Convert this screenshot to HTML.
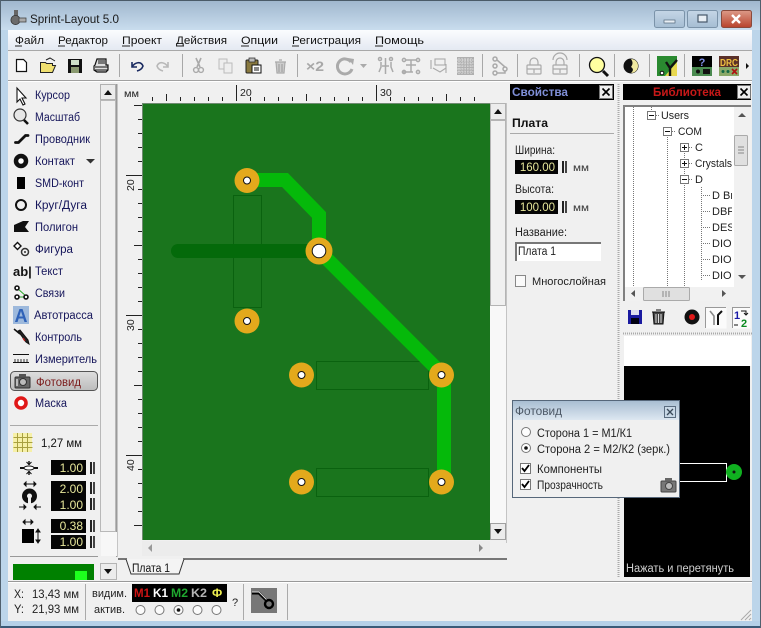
<!DOCTYPE html>
<html><head><meta charset="utf-8"><style>
html,body{margin:0;padding:0;background:#f0f0f0;width:761px;height:628px;overflow:hidden}
svg{display:block;position:absolute;left:0;top:0;filter:blur(.35px)}
text{font-family:"Liberation Sans","DejaVu Sans",sans-serif;font-size:11px}
.n text{fill:#15155a;font-size:11.5px}
.k text{fill:#111;font-size:11px}
.f text{fill:#e6e69a;font-size:12px;text-anchor:end}
.ic{fill:none;stroke:#aaa;stroke-width:1.5}
</style></head><body>
<svg width="761" height="628" viewBox="0 0 761 628" lang="ru">
<defs>
<linearGradient id="tg" x1="0" y1="0" x2="0" y2="1"><stop offset="0" stop-color="#9fb6cd"/><stop offset="1" stop-color="#c9ddee"/></linearGradient>
<linearGradient id="mg" x1="0" y1="0" x2="0" y2="1"><stop offset="0" stop-color="#fbfcfe"/><stop offset="1" stop-color="#e4e9f2"/></linearGradient>
<linearGradient id="bg" x1="0" y1="0" x2="0" y2="1"><stop offset="0" stop-color="#c5d6e6"/><stop offset="1" stop-color="#a5bdd3"/></linearGradient>
<linearGradient id="cg" x1="0" y1="0" x2="0" y2="1"><stop offset="0" stop-color="#dd9a88"/><stop offset="1" stop-color="#b8432c"/></linearGradient>
<linearGradient id="pg" x1="0" y1="0" x2="0" y2="1"><stop offset="0" stop-color="#a9bed2"/><stop offset="1" stop-color="#dde7f1"/></linearGradient>
<linearGradient id="fb" x1="0" y1="0" x2="0" y2="1"><stop offset="0" stop-color="#dedede"/><stop offset="1" stop-color="#bcbcbc"/></linearGradient>
<g id="sp"><rect width="2" height="12" fill="#222"/><rect x="3" width="2" height="12" fill="#444"/></g>
</defs>

<!-- frame -->
<rect width="761" height="628" fill="#bcd5ea"/>
<rect width="761" height="30" fill="url(#tg)"/>
<rect width="761" height="1" fill="#4a5a68"/>
<rect x="8" y="30" width="744" height="591" fill="#f0f0f0"/>
<rect y="621" width="761" height="7" fill="#b5d0e8"/>
<rect y="626" width="761" height="2" fill="#3a5a78"/>
<rect width="1" height="628" fill="#50606e"/>
<rect x="760" width="1" height="628" fill="#50606e"/>

<!-- title -->
<g>
<rect x="14" y="10" width="4" height="8" fill="#666"/>
<circle cx="15.5" cy="20" r="4.6" fill="#6b6b6b" stroke="#333" stroke-width=".8"/>
<rect x="19" y="18" width="7" height="4" fill="#aaa" stroke="#444" stroke-width=".8"/>
<text x="30" y="23" fill="#1a1a1a" textLength="89" lengthAdjust="spacingAndGlyphs" style="font-size:12px">Sprint-Layout 5.0</text>
</g>
<rect x="654.5" y="10.5" width="30" height="17" rx="2" fill="url(#bg)" stroke="#7b93a9"/>
<rect x="664" y="20" width="11" height="3" fill="#e8eef4" stroke="#516579" stroke-width=".7"/>
<rect x="687.5" y="10.5" width="30" height="17" rx="2" fill="url(#bg)" stroke="#7b93a9"/>
<rect x="698" y="15" width="9" height="7" fill="#e8eef4" stroke="#46586a" stroke-width="1.2"/>
<rect x="721.5" y="10.5" width="30" height="17" rx="2" fill="url(#cg)" stroke="#8a4a3c"/>
<path d="M732 15l8 8M740 15l-8 8" stroke="#fff" stroke-width="2.4"/>

<!-- menu -->
<rect x="8" y="30" width="744" height="20" fill="url(#mg)"/>
<g class="k" >
<text x="15" y="44" textLength="29" lengthAdjust="spacingAndGlyphs">Файл</text>
<text x="58" y="44" textLength="50" lengthAdjust="spacingAndGlyphs">Редактор</text>
<text x="122" y="44" textLength="40" lengthAdjust="spacingAndGlyphs">Проект</text>
<text x="176" y="44" textLength="51" lengthAdjust="spacingAndGlyphs">Действия</text>
<text x="241" y="44" textLength="37" lengthAdjust="spacingAndGlyphs">Опции</text>
<text x="292" y="44" textLength="69" lengthAdjust="spacingAndGlyphs">Регистрация</text>
<text x="375" y="44" textLength="49" lengthAdjust="spacingAndGlyphs">Помощь</text>
</g>
<path d="M15 46h7M58 46h7M122 46h8M176 46h8M241 46h8M292 46h7M375 46h8" stroke="#222" stroke-width="1"/>
<rect x="8" y="50" width="744" height="1" fill="#a8a8a8"/>
<rect x="8" y="51" width="744" height="29" fill="#f0f0f0"/>
<rect x="8" y="80" width="744" height="1" fill="#a0a0a0"/>
<rect x="8" y="81" width="744" height="1" fill="#fff"/>

<!-- toolbar separators -->
<path d="M119.5 54v23M182.5 54v23M297.5 54v23M482.5 54v23M517.5 54v23M579.5 54v23M614.5 54v23M649.5 54v23M684.5 54v23" stroke="#a8a8a8"/>

<!-- toolbar icons -->
<path d="M16.5 59.500h7l3 3v9h-10z" fill="#fff" stroke="#111" stroke-width="1.200"/>
<path d="M40.500 72.500v-10h5l1 1h6v2h3l-3 7z" fill="#f0e070" stroke="#222"/><path d="M46 60l4-2 5 3" fill="none" stroke="#222"/>
<rect x="68" y="59" width="14" height="14" fill="#111"/><rect x="71" y="60" width="8" height="5" fill="#cfe0c8"/><rect x="71" y="67" width="8" height="6" fill="#8a9a70"/>
<path d="M95 65l2-6h9v6h2v5l-2 2H97l-3-2v-4z" fill="#ddd" stroke="#111" stroke-width="1.200"/><path d="M95 67h13M95 70h13M98 61h7M98 63h7" stroke="#111"/>
<path d="M132 62v5h5M132 67c3-5 9-6 11-1-1 3-3 4-6 5" fill="none" stroke="#1a2a60" stroke-width="1.600"/>
<path d="M168 62v5h-5M168 67c-3-5-9-6-11-1 1 3 3 4 6 5" fill="none" stroke="#b8b8b8" stroke-width="1.600"/>
<path d="M196 58l4 9M201 58l-4 9" stroke="#aaa" stroke-width="1.600"/><circle cx="196" cy="70" r="2.400" fill="none" stroke="#aaa" stroke-width="1.400"/><circle cx="201" cy="70" r="2.400" fill="none" stroke="#aaa" stroke-width="1.400"/>
<rect x="219" y="59" width="8" height="10" fill="#eee" stroke="#bbb"/><rect x="224" y="63" width="8" height="10" fill="#eee" stroke="#bbb"/>
<rect x="246" y="60" width="12" height="13" rx="1" fill="#8a7a40" stroke="#222"/><rect x="249" y="58" width="6" height="4" fill="#bbb" stroke="#222" stroke-width=".7"/><rect x="252" y="65" width="9" height="8" fill="#fff" stroke="#111"/><path d="M254 68h5M254 70h5" stroke="#111"/>
<path d="M275 62h11M279 60h3M276 62l1 11h7l1-11" fill="#ccc" stroke="#aaa" stroke-width="1.200"/><path d="M279 64v8M282 64v8" stroke="#999"/>
<text x="306" y="71" style="font-size:14px;font-weight:bold;fill:#a8a8a8" textLength="18" lengthAdjust="spacingAndGlyphs">×2</text>
<path d="M351 62a7.500 7.500 0 1 0 1 7" fill="none" stroke="#aaa" stroke-width="3"/><path d="M348 58l6 1-1 6z" fill="#aaa"/>
<path d="M360 64h7l-3.500 4z" fill="#aaa"/>
<g class="ic"><path d="M381 62v5l-2 5M391 62v5l2 5M385.500 58v16M382 66h7"/><circle cx="380" cy="59" r="1.500"/><circle cx="391" cy="59" r="1.500"/></g>
<g class="ic"><path d="M406 60h10M406 65h10M403 72h10M411 60v12"/><circle cx="404" cy="60" r="1.600"/><circle cx="418" cy="60" r="1.600"/><circle cx="404" cy="72" r="1.600"/><circle cx="418" cy="72" r="1.600"/></g>
<g class="ic" style="stroke-width:1.100"><rect x="435" y="59" width="10" height="6"/><path d="M431 60v9M446 64v9M433 68l7 4 6-4"/></g>
<rect x="457" y="57" width="17" height="18" fill="#b0b0b0"/><path d="M459 58v16M462 58v16M465 58v16M468 58v16M471 58v16M457 60h17M457 63h17M457 66h17M457 69h17M457 72h17" stroke="#ddd" stroke-dasharray="1.500 1"/>
<g class="ic"><circle cx="495" cy="59" r="2"/><circle cx="495" cy="66" r="2"/><circle cx="495" cy="73" r="2"/><circle cx="505" cy="69" r="2"/><path d="M497 60l8 7M497 73h8v-2"/></g>
<g class="ic" style="stroke-width:1.200"><path d="M530 65v-3a4 4 0 0 1 8 0v3"/><rect x="527" y="65" width="14" height="9" rx="1"/><path d="M527 69h14M534 69v4"/></g>
<g class="ic" style="stroke-width:1.200"><path d="M556 65v-3a4 4 0 0 1 8 0v3M553 60a7 7 0 0 1 14 0"/><rect x="553" y="65" width="14" height="9" rx="1"/><path d="M553 69h14M560 69v4"/></g>
<circle cx="597" cy="65" r="7.500" fill="#ffffa0" stroke="#111" stroke-width="1.300"/><path d="M603 71l5 5" stroke="#111" stroke-width="3"/>
<circle cx="631" cy="66" r="7.500" fill="#111"/><path d="M631 59a7 7 0 0 1 0 14c2-2 3-4 0-6 2-3 2-5 0-8z" fill="#f0e9a0"/>
<rect x="657" y="56" width="20" height="20" fill="#2a9a3a"/><path d="M657 56h20v6l-14 14h-6z" fill="#2a8a30"/><path d="M665 76l12-14v14z" fill="#e8d850"/><path d="M670 76v-8l7-8M670 68l-4-6" stroke="#111" stroke-width="2.400" fill="none"/><circle cx="662" cy="73" r="1.800" fill="#fff" stroke="#111"/>
<rect x="692" y="56" width="20" height="11" fill="#000"/><text x="702" y="66" style="font-size:11px;font-weight:bold;fill:#8090e8;text-anchor:middle">?</text>
<rect x="692" y="67" width="20" height="9" fill="#4a8a50"/><circle cx="698" cy="71.500" r="2" fill="#111"/><rect x="703" y="69" width="7" height="5" fill="#111"/>
<rect x="719" y="56" width="20" height="11" fill="#5a3028"/><text x="729" y="66" style="font-size:10px;font-weight:bold;fill:#f0c040;text-anchor:middle" textLength="18" lengthAdjust="spacingAndGlyphs">DRC</text>
<rect x="719" y="67" width="20" height="9" fill="#8aa868"/><circle cx="723" cy="71.500" r="1.500" fill="#164"/><circle cx="728" cy="71.500" r="1.500" fill="#164"/><path d="M732 69l5 5M737 69l-5 5" stroke="#b01010" stroke-width="1.600"/>
<path d="M746 63v6l3-3z" fill="#111"/>

<!-- left scrollbar -->
<rect x="100.500" y="84.500" width="15" height="15" fill="#ebebeb" stroke="#b0b0b0"/>
<path d="M104 95h8l-4-5z" fill="#111"/>
<rect x="100.500" y="100.500" width="15" height="431" fill="#f0f0f0" stroke="#b8b8b8"/>
<rect x="116" y="84" width="1.500" height="473" fill="#9a9a9a"/>
<rect x="101" y="532" width="16" height="24" fill="#f7f7f7"/>

<!-- left tools -->
<g class="n">
<text x="35" y="99" textLength="35" lengthAdjust="spacingAndGlyphs">Курсор</text>
<text x="35" y="121" textLength="45" lengthAdjust="spacingAndGlyphs">Масштаб</text>
<text x="35" y="143" textLength="55" lengthAdjust="spacingAndGlyphs">Проводник</text>
<text x="35" y="165" textLength="40" lengthAdjust="spacingAndGlyphs">Контакт</text>
<text x="35" y="187" textLength="49" lengthAdjust="spacingAndGlyphs">SMD-конт</text>
<text x="35" y="209" textLength="52" lengthAdjust="spacingAndGlyphs">Круг/Дуга</text>
<text x="35" y="231" textLength="43" lengthAdjust="spacingAndGlyphs">Полигон</text>
<text x="35" y="253" textLength="38" lengthAdjust="spacingAndGlyphs">Фигура</text>
<text x="35" y="275" textLength="28" lengthAdjust="spacingAndGlyphs">Текст</text>
<text x="35" y="297" textLength="30" lengthAdjust="spacingAndGlyphs">Связи</text>
<text x="34" y="319" textLength="59" lengthAdjust="spacingAndGlyphs">Автотрасса</text>
<text x="35" y="341" textLength="47" lengthAdjust="spacingAndGlyphs">Контроль</text>
<text x="35" y="363" textLength="62" lengthAdjust="spacingAndGlyphs">Измеритель</text>
<text x="35" y="407" textLength="32" lengthAdjust="spacingAndGlyphs">Маска</text>
</g>
<path d="M17 88v14l3-3 3 6 2-1-3-6h4z" fill="#fff" stroke="#111" stroke-width="1.100"/>
<circle cx="20" cy="115" r="6" fill="#e6e6e6" stroke="#333" stroke-width="1.200"/><path d="M24 120l4 4" stroke="#111" stroke-width="2.600"/>
<path d="M15.500 142.500h3l7-7h2.500" fill="none" stroke="#111" stroke-width="2.800" stroke-linecap="round"/>
<circle cx="21" cy="161" r="5" fill="#fff" stroke="#111" stroke-width="4.500"/>
<rect x="17" y="177" width="8" height="12" fill="#000"/>
<circle cx="21" cy="205" r="5" fill="none" stroke="#111" stroke-width="2"/>
<path d="M14 232v-7l9-4h6l-4 6 4 5z" fill="#111"/>
<path d="M14 246l3.500-3.500 3.500 3.500-3.500 3.500z" fill="#fff" stroke="#111" stroke-width="1.400"/><circle cx="25" cy="252" r="3.500" fill="none" stroke="#333" stroke-width="1.500"/><circle cx="25" cy="252" r="1" fill="#333"/>
<text x="13" y="276" style="font-size:13px;font-weight:bold;fill:#111">ab|</text>
<path d="M17 288l10 9H17" fill="none" stroke="#2aa82a"/><circle cx="17" cy="288" r="2" fill="#fff" stroke="#111" stroke-width="1.600"/><circle cx="17" cy="297" r="2" fill="#fff" stroke="#111" stroke-width="1.600"/><circle cx="26" cy="297" r="2" fill="#fff" stroke="#111" stroke-width="1.600"/>
<rect x="13" y="306" width="16" height="18" fill="#9db9dc"/><text x="21" y="322" style="font-size:18px;font-weight:bold;fill:#2f62b8;text-anchor:middle">A</text>
<path d="M14 329l6 5" stroke="#111" stroke-width="1.500"/><path d="M18 331l8 11 3 2-1-4-8-10z" fill="#222" stroke="#111"/><path d="M23 338l2 3" stroke="#b02020" stroke-width="1.500"/>
<path d="M13 362.500h16" stroke="#111"/><path d="M13 354.500h16" stroke="#111"/><path d="M15 362v-3M18 362v-3M21 362v-3M24 362v-3M27 362v-3" stroke="#333"/>
<rect x="10.500" y="371.500" width="87" height="19" rx="4" fill="url(#fb)" stroke="#555"/>
<rect x="15" y="377" width="15" height="11" rx="1" fill="#666" stroke="#333"/><rect x="19" y="374" width="7" height="3" fill="#555"/><circle cx="23" cy="382" r="3.500" fill="#bbb" stroke="#333"/><rect x="16" y="379" width="2" height="7" fill="#bbb"/>
<text x="36" y="386" style="font-size:11.500px;fill:#7a1a1a" textLength="45" lengthAdjust="spacingAndGlyphs">Фотовид</text>
<path d="M86 159h9l-4.500 4.500z" fill="#333"/>
<circle cx="21" cy="403" r="5" fill="#fff" stroke="#e01818" stroke-width="3.600"/>
<rect x="10" y="425" width="88" height="1" fill="#aaa"/>

<!-- grid & fields -->
<rect x="13" y="433" width="19" height="19" fill="#f6f0a8"/>
<path d="M13.500 437.500h19M13.500 442.500h19M13.500 447.500h19M17.500 433v19M22.500 433v19M27.500 433v19" stroke="#a8a040"/>
<text x="41" y="447" style="font-size:11.500px;fill:#111" textLength="41" lengthAdjust="spacingAndGlyphs">1,27 мм</text>
<rect x="51" y="460" width="35" height="15" fill="#050505"/>
<rect x="51" y="481" width="35" height="15" fill="#050505"/>
<rect x="51" y="496" width="35" height="15" fill="#050505"/>
<rect x="51" y="519" width="35" height="14" fill="#050505"/>
<rect x="51" y="535" width="35" height="14" fill="#050505"/>
<g class="f"><text x="83" y="472">1.00</text><text x="83" y="493">2.00</text><text x="83" y="509">1.00</text><text x="83" y="530">0.38</text><text x="83" y="546">1.00</text></g>
<use href="#sp" x="90" y="462"/><use href="#sp" x="90" y="482"/><use href="#sp" x="90" y="498"/><use href="#sp" x="90" y="520"/><use href="#sp" x="90" y="536"/>
<path d="M20 468h18" stroke="#111" stroke-width="2"/><ellipse cx="29" cy="468" rx="5" ry="2" fill="#fff" stroke="#111"/><path d="M29 461v4M29 471v4" stroke="#111" stroke-width="1.400"/><path d="M26.500 462l2.500 2.500 2.500-2.500M26.500 474l2.500-2.500 2.500 2.500" fill="none" stroke="#111"/>
<path d="M24 484h12M24 484l2-2v4zM36 484l-2-2v4z" stroke="#111" fill="#111"/>
<circle cx="29.500" cy="496" r="5" fill="#f0f0f0" stroke="#111" stroke-width="5"/>
<rect x="28" y="496" width="3" height="8" fill="#f0f0f0"/>
<path d="M19 507h7M41 507h-7M26 507l-2-2v4zM34 507l2-2v4z" stroke="#111" fill="#111"/>
<rect x="22" y="529" width="12" height="14" fill="#000"/>
<path d="M23 522h10M23 522l2-2v4zM33 522l-2-2v4zM38 529v14M38 529l-2 3h4zM38 543l-2-3h4z" stroke="#111" fill="#111"/>
<rect x="10" y="556" width="88" height="1" fill="#999"/>
<rect x="13" y="564" width="81" height="16" fill="#008000"/>
<rect x="75" y="571" width="12" height="9" fill="#1dff1d"/>
<rect x="100.500" y="563.500" width="16" height="16" fill="#ececec" stroke="#b4b4b4"/>
<path d="M104 569h8l-4 5z" fill="#111"/>

<!-- ruler -->
<path d="M236.500 85v16M376.500 85v16M166.500 94v7M306.500 94v7M446.500 94v7M152.500 97v4M180.500 97v4M194.500 97v4M208.500 97v4M222.500 97v4M250.500 97v4M264.500 97v4M278.500 97v4M292.500 97v4M320.500 97v4M334.500 97v4M348.500 97v4M362.500 97v4M390.500 97v4M404.500 97v4M418.500 97v4M432.500 97v4M460.500 97v4M474.500 97v4" stroke="#222" stroke-width="1"/>
<path d="M126 175.500h16M126 315.500h16M126 455.500h16M134 105.500h8M134 245.500h8M134 385.500h8M134 525.500h8M138 119.500h4M138 133.500h4M138 147.500h4M138 161.500h4M138 189.500h4M138 203.500h4M138 217.500h4M138 231.500h4M138 259.500h4M138 273.500h4M138 287.500h4M138 301.500h4M138 329.500h4M138 343.500h4M138 357.500h4M138 371.500h4M138 399.500h4M138 413.500h4M138 427.500h4M138 441.500h4M138 469.500h4M138 483.500h4M138 497.500h4M138 511.500h4" stroke="#222"/>
<text x="124" y="97" style="font-size:10px;fill:#222" textLength="15" lengthAdjust="spacingAndGlyphs">мм</text>
<text x="240" y="96" style="font-size:10.500px;fill:#222">20</text>
<text x="380" y="96" style="font-size:10.500px;fill:#222">30</text>
<text transform="translate(134,191) rotate(-90)" style="font-size:10.500px;fill:#222">20</text>
<text transform="translate(134,331) rotate(-90)" style="font-size:10.500px;fill:#222">30</text>
<text transform="translate(134,471) rotate(-90)" style="font-size:10.500px;fill:#222">40</text>

<!-- board -->
<rect x="142" y="103" width="348" height="437" fill="#1a751d"/>
<path d="M142 103.500h348M142.500 103v437" stroke="#6e8a70"/>
<g fill="none" stroke="#0a620f" stroke-width="1"><rect x="233.500" y="195.500" width="28" height="112"/><rect x="316.500" y="361.500" width="112" height="28"/><rect x="316.500" y="468.500" width="112" height="28"/></g>
<path d="M178 251H319" stroke="#046a0a" stroke-width="14" stroke-linecap="round"/>
<path d="M247 180H285L319 215V251L444 376V482" fill="none" stroke="#05b90a" stroke-width="14" stroke-linejoin="miter"/>
<g fill="#e3a91c"><circle cx="247" cy="180.500" r="12.500"/><circle cx="247" cy="321" r="12.500"/><circle cx="301.500" cy="375" r="12.500"/><circle cx="441.500" cy="375" r="12.500"/><circle cx="301.500" cy="482" r="12.500"/><circle cx="441.500" cy="482" r="12.500"/><circle cx="319" cy="251" r="13.500"/></g>
<g fill="#fff" stroke="#111"><circle cx="247" cy="180.500" r="3.500"/><circle cx="247" cy="321" r="3.500"/><circle cx="301.500" cy="375" r="3.500"/><circle cx="441.500" cy="375" r="3.500"/><circle cx="301.500" cy="482" r="3.500"/><circle cx="441.500" cy="482" r="3.500"/><circle cx="319" cy="251" r="6.800"/></g>

<!-- right v scrollbar -->
<rect x="490" y="103" width="16" height="437" fill="#f8f8f8"/>
<rect x="490.500" y="103.500" width="15" height="16" fill="#ececec" stroke="#b4b4b4"/>
<path d="M494 114h8l-4-5z" fill="#111"/>
<rect x="490.500" y="120.500" width="15" height="185" fill="#f0f0f0" stroke="#b4b4b4"/>
<rect x="490.500" y="523.500" width="15" height="16" fill="#ececec" stroke="#a0a0a0"/>
<path d="M494 529h8l-4 5z" fill="#111"/>
<rect x="506" y="103" width="1" height="440" fill="#c4c4c4"/>

<!-- h scrollbar -->
<rect x="142" y="541" width="348" height="15" fill="#ececec"/>
<path d="M152 544v8l-4-4z" fill="#999"/><path d="M479 544v8l4-4z" fill="#888"/>
<rect x="118" y="558" width="389" height="2" fill="#777"/>
<rect x="127" y="558" width="56" height="3" fill="#f0f0f0"/>
<path d="M126 559l5 15h48l5-15" fill="#f4f4f4" stroke="#333"/>
<text x="132" y="572" style="font-size:11.500px;fill:#111" textLength="38" lengthAdjust="spacingAndGlyphs">Плата 1</text>
<rect x="8" y="581" width="744" height="1" fill="#999"/>
<rect x="8" y="582" width="744" height="1" fill="#fff"/>

<!-- status -->
<path d="M85.500 584v36M243.500 584v36M287.500 584v36" stroke="#aaa"/>
<text x="14" y="598" style="font-size:11.500px;fill:#222" textLength="10" lengthAdjust="spacingAndGlyphs">X:</text>
<text x="14" y="613" style="font-size:11.500px;fill:#222" textLength="10" lengthAdjust="spacingAndGlyphs">Y:</text>
<text x="32" y="598" style="font-size:11.500px;fill:#222" textLength="47" lengthAdjust="spacingAndGlyphs">13,43 мм</text>
<text x="32" y="613" style="font-size:11.500px;fill:#222" textLength="47" lengthAdjust="spacingAndGlyphs">21,93 мм</text>
<text x="92" y="597" style="font-size:11px;fill:#222" textLength="35" lengthAdjust="spacingAndGlyphs">видим.</text>
<text x="94" y="613" style="font-size:11px;fill:#222" textLength="31" lengthAdjust="spacingAndGlyphs">актив.</text>
<rect x="132" y="584" width="95" height="18" fill="#000"/>
<text x="134" y="597" style="font-size:12px;font-weight:bold;fill:#d01414" textLength="16" lengthAdjust="spacingAndGlyphs">M1</text>
<text x="153" y="597" style="font-size:12px;font-weight:bold;fill:#fff" textLength="15" lengthAdjust="spacingAndGlyphs">K1</text>
<text x="171" y="597" style="font-size:12px;font-weight:bold;fill:#1fa82f" textLength="17" lengthAdjust="spacingAndGlyphs">M2</text>
<text x="191" y="597" style="font-size:12px;font-weight:bold;fill:#b4b4b4" textLength="16" lengthAdjust="spacingAndGlyphs">K2</text>
<text x="212" y="597" style="font-size:12px;font-weight:bold;fill:#f0f050">Ф</text>
<g fill="#fbfbfb" stroke="#777"><circle cx="140.500" cy="610" r="4.500"/><circle cx="159.500" cy="610" r="4.500"/><circle cx="178.500" cy="610" r="4.500"/><circle cx="197.500" cy="610" r="4.500"/><circle cx="216.500" cy="610" r="4.500"/></g>
<circle cx="178.500" cy="610" r="1.800" fill="#111"/>
<text x="232" y="606" style="font-size:11px;fill:#222">?</text>
<rect x="251" y="588" width="26" height="25" fill="#777"/>
<path d="M252 593h7l9 9" fill="none" stroke="#000" stroke-width="3"/><path d="M252 592h7l9 9" fill="none" stroke="#fff" stroke-width="1" opacity=".85"/>
<circle cx="269" cy="604" r="4" fill="#777" stroke="#000" stroke-width="2.400"/>
<path d="M741 620l10-10M745 620l6-6M749 620l2-2" stroke="#aaa" stroke-width="1"/>

<!-- props -->
<rect x="510" y="84" width="104" height="16" fill="#000"/>
<text x="512" y="96" style="font-size:12px;font-weight:bold;fill:#7f8fd8" textLength="56" lengthAdjust="spacingAndGlyphs">Свойства</text>
<rect x="599.500" y="85.500" width="13" height="13" fill="#eee" stroke="#777"/>
<path d="M602.500 88.500l7 7M609.500 88.500l-7 7" stroke="#000" stroke-width="1.600"/>
<text x="512" y="127" style="font-size:11.500px;font-weight:bold;fill:#111" textLength="36" lengthAdjust="spacingAndGlyphs">Плата</text>
<rect x="510" y="133" width="104" height="1" fill="#aaa"/>
<text x="515" y="154" style="font-size:11.500px;fill:#222" textLength="40" lengthAdjust="spacingAndGlyphs">Ширина:</text>
<rect x="515" y="160" width="43" height="14" fill="#050505"/>
<text x="555" y="171" style="font-size:11.500px;fill:#e6e69a;text-anchor:end">160.00</text>
<use href="#sp" x="562" y="161"/>
<text x="573" y="171" style="font-size:10.500px;fill:#333" textLength="16" lengthAdjust="spacingAndGlyphs">мм</text>
<text x="515" y="193" style="font-size:11.500px;fill:#222" textLength="39" lengthAdjust="spacingAndGlyphs">Высота:</text>
<rect x="515" y="200" width="43" height="14" fill="#050505"/>
<text x="555" y="211" style="font-size:11.500px;fill:#e6e69a;text-anchor:end">100.00</text>
<use href="#sp" x="562" y="201"/>
<text x="573" y="211" style="font-size:10.500px;fill:#333" textLength="16" lengthAdjust="spacingAndGlyphs">мм</text>
<text x="515" y="236" style="font-size:11.500px;fill:#222" textLength="52" lengthAdjust="spacingAndGlyphs">Название:</text>
<rect x="515" y="242" width="86" height="19" fill="#fff"/>
<path d="M516 261v-18h85" fill="none" stroke="#777" stroke-width="2"/>
<text x="518" y="255" style="font-size:11.500px;fill:#222" textLength="38" lengthAdjust="spacingAndGlyphs">Плата 1</text>
<rect x="515.500" y="275.500" width="10" height="11" fill="#fafafa" stroke="#888"/>
<text x="532" y="285" style="font-size:11px;fill:#222" textLength="74" lengthAdjust="spacingAndGlyphs">Многослойная</text>

<!-- dotted separator -->
<path d="M618.500 84v494" stroke="#aaa" stroke-dasharray="1 1" stroke-width="2"/>

<!-- library -->
<rect x="623" y="84" width="128" height="16" fill="#000"/>
<text x="653" y="96" style="font-size:12px;font-weight:bold;fill:#c81818" textLength="68" lengthAdjust="spacingAndGlyphs">Библиотека</text>
<rect x="737.500" y="85.500" width="13" height="13" fill="#eee" stroke="#777"/>
<path d="M740.500 88.500l7 7M747.500 88.500l-7 7" stroke="#000" stroke-width="1.600"/>
<rect x="623" y="105" width="128" height="196" fill="#fff"/>
<path d="M624 301V106H751" fill="none" stroke="#808080" stroke-width="2"/>
<path d="M633.500 107v180M651.500 107v4M667.500 135v152M684.500 151v8M684.500 167v8M684.500 183v104M701.500 187v94M656 115.500h4M672 131.500h4M689 147.500h4M689 163.500h4M689 179.500h4M701 195.500h10M701 211.500h10M701 227.500h10M701 243.500h10M701 259.500h10M701 275.500h10" stroke="#777" stroke-dasharray="1 1" fill="none"/>
<g fill="#fff" stroke="#777"><rect x="647.500" y="111.500" width="8" height="8"/><rect x="663.500" y="127.500" width="8" height="8"/><rect x="680.500" y="143.500" width="8" height="8"/><rect x="680.500" y="159.500" width="8" height="8"/><rect x="680.500" y="175.500" width="8" height="8"/></g>
<path d="M649 115.500h5M665 131.500h5M682 147.500h5M684.500 145v5M682 163.500h5M684.500 161v5M682 179.500h5" stroke="#111"/>
<text x="661" y="119" style="fill:#222" textLength="28" lengthAdjust="spacingAndGlyphs">Users</text>
<text x="678" y="135" style="fill:#222" textLength="24" lengthAdjust="spacingAndGlyphs">COM</text>
<text x="695" y="151" style="fill:#222">C</text>
<text x="695" y="167" style="fill:#222" textLength="37" lengthAdjust="spacingAndGlyphs">Crystals</text>
<text x="695" y="183" style="fill:#222">D</text>
<text x="712" y="199" style="fill:#222">D Br</text>
<text x="712" y="215" style="fill:#222">DBF</text>
<text x="712" y="231" style="fill:#222">DES</text>
<text x="712" y="247" style="fill:#222">DIO</text>
<text x="712" y="263" style="fill:#222">DIO</text>
<text x="712" y="279" style="fill:#222">DIO</text>
<rect x="732" y="107" width="2" height="180" fill="#fff"/>
<rect x="734" y="107" width="17" height="180" fill="#f1f1f1"/>
<path d="M738 117h8l-4-4z" fill="#555"/><path d="M738 275h8l-4 4z" fill="#555"/>
<rect x="734.500" y="135.500" width="13" height="30" rx="1" fill="#e0e0e0" stroke="#aaa"/><path d="M738 147h6M738 150h6M738 153h6" stroke="#888"/>
<rect x="625" y="287" width="126" height="14" fill="#f1f1f1"/>
<path d="M635 290v7l-4-3.500z" fill="#555"/><path d="M722 290v7l4-3.500z" fill="#555"/>
<rect x="643.500" y="287.500" width="46" height="13" rx="1" fill="#e0e0e0" stroke="#aaa"/><path d="M663 291v6M666 291v6M669 291v6" stroke="#888"/>

<rect x="628" y="310" width="14" height="14" fill="#1a1aa0"/><rect x="631" y="310" width="8" height="5" fill="#dde"/><rect x="631" y="318" width="8" height="6" fill="#001"/>
<path d="M652 312h13M656 310h5M653 312l1 12h9l1-12" fill="#444" stroke="#111"/><path d="M656 314v9M658.500 314v9M661 314v9" stroke="#ddd"/>
<circle cx="692" cy="317" r="7.500" fill="#111"/><circle cx="692" cy="317" r="3" fill="#e01818"/>
<rect x="705.500" y="307.500" width="21" height="21" fill="#fbfbfb"/><path d="M705.500 328v-20.500H726" fill="none" stroke="#999"/>
<path d="M710 311l4 5v9" fill="none" stroke="#888" stroke-width="1.600"/><path d="M722 311l-4 4v10" fill="none" stroke="#111" stroke-width="2"/>
<rect x="732.500" y="307.500" width="18" height="21" fill="#fbfbfb"/><path d="M732.500 328v-20.500H750" fill="none" stroke="#999"/>
<text x="734" y="319" style="font-size:11px;font-weight:bold;fill:#1a1aa8">1</text><text x="741" y="327" style="font-size:11px;font-weight:bold;fill:#0a8a20">2</text>
<path d="M741 311h5v4M744 313l2 2 2-2M734 325h4" fill="none" stroke="#111"/>
<path d="M623 333.500h129" stroke="#aaa" stroke-dasharray="1 1" stroke-width="2"/>
<rect x="624" y="336" width="127" height="30" fill="#fff"/>
<rect x="624" y="366" width="126" height="211" fill="#000"/>
<path d="M680 463.500h46.500v18H680" fill="none" stroke="#fff"/>
<path d="M726 472.500h6" stroke="#fff"/>
<circle cx="734" cy="472" r="8" fill="#10b020"/><circle cx="734" cy="472" r="1.500" fill="#111"/>
<text x="626" y="572" style="font-size:11.500px;fill:#cfcfcf" textLength="108" lengthAdjust="spacingAndGlyphs">Нажать и перетянуть</text>

<!-- photo window -->
<rect x="512.500" y="400.500" width="167" height="97" fill="#f0f0f0" stroke="#56677a"/>
<rect x="513" y="401" width="166" height="19" fill="url(#pg)"/>
<text x="515" y="415" style="font-size:11.500px;fill:#4c5866" textLength="47" lengthAdjust="spacingAndGlyphs">Фотовид</text>
<rect x="664.500" y="406.500" width="11" height="11" fill="#c8d8e6" stroke="#5a6c80"/>
<path d="M667 409l6 6M673 409l-6 6" stroke="#3a4a5a" stroke-width="1.300"/>
<circle cx="526" cy="432" r="4.500" fill="#fdfdfd" stroke="#777"/>
<circle cx="526" cy="448" r="4.500" fill="#fdfdfd" stroke="#777"/><circle cx="526" cy="448" r="1.800" fill="#111"/>
<text x="537" y="437" style="font-size:11.500px;fill:#222" textLength="95" lengthAdjust="spacingAndGlyphs">Сторона 1 = М1/К1</text>
<text x="537" y="453" style="font-size:11.500px;fill:#222" textLength="133" lengthAdjust="spacingAndGlyphs">Сторона 2 = М2/К2 (зерк.)</text>
<text x="537" y="473" style="font-size:11.500px;fill:#222" textLength="65" lengthAdjust="spacingAndGlyphs">Компоненты</text>
<text x="537" y="489" style="font-size:11.500px;fill:#222" textLength="66" lengthAdjust="spacingAndGlyphs">Прозрачность</text>
<rect x="520.500" y="463.500" width="10" height="10" fill="#fff" stroke="#777"/><path d="M522 468l2.500 3 4.500-6" fill="none" stroke="#000" stroke-width="1.800"/>
<rect x="520.500" y="479.500" width="10" height="10" fill="#fff" stroke="#777"/><path d="M522 484l2.500 3 4.500-6" fill="none" stroke="#000" stroke-width="1.800"/>
<rect x="661" y="481" width="15" height="11" rx="1" fill="#777" stroke="#444"/><rect x="665" y="478" width="7" height="3" fill="#666"/><circle cx="669" cy="486" r="3.500" fill="#bbb" stroke="#444"/>
</svg>
</body></html>
